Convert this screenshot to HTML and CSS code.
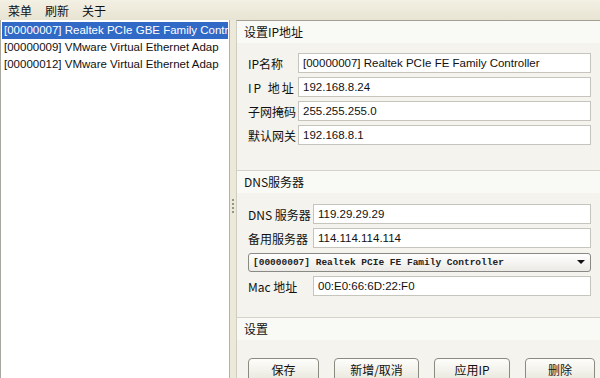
FILE: index.html
```html
<!DOCTYPE html>
<html lang="zh-CN">
<head>
<meta charset="utf-8">
<title>IP设置</title>
<link rel="stylesheet" href="styles.css">
</head>
<body>
<div class="app">
  <div class="menubar">
    <span class="menu-item">菜单</span>
    <span class="menu-item">刷新</span>
    <span class="menu-item">关于</span>
  </div>
  <div class="main">
    <div class="list">
      <div class="item sel">[00000007] Realtek PCIe GBE Family Contr</div>
      <div class="item">[00000009] VMware Virtual Ethernet Adap</div>
      <div class="item">[00000012] VMware Virtual Ethernet Adap</div>
    </div>
    <div class="splitter"><span class="grip"></span></div>
    <div class="panel">
      <div class="group g1">
        <div class="ghead">设置IP地址</div>
        <div class="gbody">
          <div class="row"><span class="lbl">IP名称</span><div class="field">[00000007] Realtek PCIe FE Family Controller</div></div>
          <div class="row"><span class="lbl spaced">IP 地址</span><div class="field">192.168.8.24</div></div>
          <div class="row"><span class="lbl">子网掩码</span><div class="field">255.255.255.0</div></div>
          <div class="row"><span class="lbl">默认网关</span><div class="field">192.168.8.1</div></div>
        </div>
      </div>
      <div class="group g2">
        <div class="ghead">DNS服务器</div>
        <div class="gbody">
          <div class="row"><span class="lbl">DNS 服务器</span><div class="field">119.29.29.29</div></div>
          <div class="row"><span class="lbl">备用服务器</span><div class="field">114.114.114.114</div></div>
          <div class="row"><div class="select"><span class="sel-text">[00000007] Realtek PCIe FE Family Controller</span><span class="arrow"></span></div></div>
          <div class="row"><span class="lbl">Mac 地址</span><div class="field">00:E0:66:6D:22:F0</div></div>
        </div>
      </div>
      <div class="group g3">
        <div class="ghead">设置</div>
        <div class="buttons">
          <div class="btn b1">保存</div>
          <div class="btn b2">新增/取消</div>
          <div class="btn b3">应用IP</div>
          <div class="btn b4">删除</div>
        </div>
      </div>
    </div>
  </div>
</div>
</body>
</html>
```

FILE: styles.css
```css
* { box-sizing: border-box; }
html, body { margin: 0; padding: 0; }
body {
  width: 600px;
  height: 378px;
  overflow: hidden;
  font-family: "Liberation Sans", "Noto Sans CJK SC", sans-serif;
  font-size: 12px;
  color: #111;
  background: #ece9d8;
}
.app {
  width: 600px;
  height: 378px;
  display: flex;
  flex-direction: column;
}
.menubar {
  height: 20px;
  flex: none;
  display: flex;
  align-items: center;
  gap: 13px;
  padding-left: 8px;
  background: linear-gradient(#f3f0e4, #e8e4d3);
  font-family: "Noto Sans CJK SC", sans-serif;
  font-size: 12px;
  color: #111;
}
.main {
  flex: 1;
  display: flex;
  min-height: 0;
}
.list {
  width: 230px;
  flex: none;
  background: #fff;
  border-left: 1px solid #a8a8a0;
  border-right: 1px solid #b4b2a8;
  padding-top: 2px;
  overflow: hidden;
}
.item {
  height: 17px;
  line-height: 17px;
  padding-left: 2px;
  margin: 0 1px;
  white-space: nowrap;
  overflow: hidden;
  font-size: 11.5px;
  color: #111;
}
.item.sel {
  background: #3169c6;
  color: #fff;
}
.splitter {
  width: 6px;
  flex: none;
  background: #ece9d8;
  display: flex;
  align-items: center;
  justify-content: center;
  padding-top: 14px;
}
.grip {
  width: 2px;
  height: 14px;
  background: repeating-linear-gradient(to bottom, #96948a 0 2px, transparent 2px 4px);
}
.panel {
  flex: 1;
  min-width: 0;
  border-left: 1px solid #cfcdc3;
  border-top: 1px solid #a39f93;
  background: #f4f3ed;
  display: flex;
  flex-direction: column;
}
.group + .group {
  border-top: 1px solid #d6d4ca;
}
.ghead {
  height: 22px;
  line-height: 22px;
  padding-left: 7px;
  background: #f9f9f5;
  font-family: "Noto Sans CJK SC", sans-serif;
  font-size: 12px;
  color: #111;
}
.gbody {
  display: flex;
  flex-direction: column;
  gap: 4px;
  padding: 10px 9px 25px 11px;
}
.g2 .gbody {
  padding-top: 11px;
  padding-bottom: 21px;
}
.row {
  display: flex;
  height: 20px;
  align-items: center;
}
.lbl {
  flex: none;
  width: 50px;
  font-family: "Noto Sans CJK SC", sans-serif;
  font-size: 12px;
  color: #111;
  white-space: nowrap;
}
.g2 .lbl { width: 65px; }
.lbl.spaced { letter-spacing: 2px; }
.field {
  flex: 1;
  height: 20px;
  line-height: 18px;
  border: 1px solid #c6c5bd;
  background: #fff;
  padding-left: 4px;
  white-space: nowrap;
  overflow: hidden;
  font-family: "Liberation Sans", sans-serif;
  font-size: 11.5px;
  color: #111;
}
.select {
  flex: 1;
  height: 19px;
  display: flex;
  align-items: center;
  justify-content: space-between;
  border: 1px solid #8a8984;
  border-radius: 3px;
  background: linear-gradient(#ffffff, #ebeae6);
  padding: 0 5px 0 4px;
}
.sel-text {
  font-family: "Liberation Mono", monospace;
  font-size: 9.5px;
  font-weight: bold;
  color: #222;
  white-space: nowrap;
}
.arrow {
  width: 0;
  height: 0;
  border-left: 4px solid transparent;
  border-right: 4px solid transparent;
  border-top: 4px solid #111;
}
.buttons {
  display: flex;
  gap: 15px;
  padding: 18px 0 0 11px;
}
.btn {
  height: 24px;
  line-height: 22px;
  text-align: center;
  border: 1px solid #8c8a80;
  border-radius: 4px;
  background: linear-gradient(#fdfdfb, #e9e7dc);
  font-family: "Noto Sans CJK SC", sans-serif;
  font-size: 12px;
  color: #111;
  flex: none;
}
.b1 { width: 71px; }
.b2 { width: 85px; }
.b3 { width: 76px; }
.b4 { width: 70px; }
```
